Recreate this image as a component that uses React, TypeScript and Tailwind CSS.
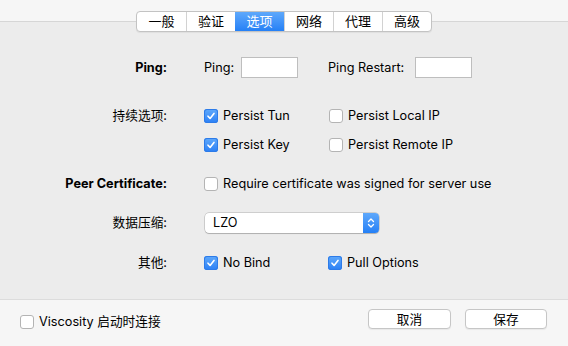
import React from 'react';

const font = { fontFamily: 'Inter, "Noto Sans CJK SC", sans-serif' };

const tabs = ['一般', '验证', '选项', '网络', '代理', '高级'];

function Checkbox({ checked, label }: { checked?: boolean; label: string }) {
    return (
        <div className="flex items-center gap-[5px]">
            {checked ? (
                <span className="flex h-[14px] w-[14px] items-center justify-center rounded-[3px] bg-gradient-to-b from-[#5fa9fb] to-[#2a7ff5] shadow-[inset_0_0_0_1px_#2d7be8]">
                    <svg width="10" height="10" viewBox="0 0 10 10" fill="none">
                        <path d="M2 5.2 L4.1 7.4 L8 2.4" stroke="white" strokeWidth="1.6" strokeLinecap="round" strokeLinejoin="round" />
                    </svg>
                </span>
            ) : (
                <span className="h-[14px] w-[14px] rounded-[3px] border border-[#b4b4b4] bg-white" />
            )}
            <span>{label}</span>
        </div>
    );
}

function Row({ label, bold, className, children }: { label: string; bold?: boolean; className?: string; children?: React.ReactNode }) {
    return (
        <div className={"flex items-center " + (className || '')}>
            <div className={"w-[167px] text-right " + (bold ? 'font-bold' : '')}>{label}</div>
            <div className="ml-[37px] flex items-center">{children}</div>
        </div>
    );
}

export default function App() {
    return (
        <div className="flex h-[346px] w-[568px] flex-col bg-[#ececec] text-[12.7px] text-black" style={font}>
            <div className="h-[22px] shrink-0 border-b border-[#d6d6d6] bg-[#f6f6f6]" />

            {/* tab switcher sits on the border line */}
            <div className="-mt-[11px] flex justify-center">
                <div className="flex h-[21px] overflow-hidden rounded-[4px] border border-[#c3c3c3] bg-white text-[13px] shadow-[0_1px_1px_rgba(0,0,0,0.06)]">
                    {tabs.map((t, i) => (
                        <div
                            key={t}
                            className={
                                "flex w-[49px] items-center justify-center " +
                                (i > 0 ? 'border-l border-[#d2d2d2] ' : '') +
                                (i === 2 ? 'border-l-0 bg-gradient-to-b from-[#5ea8fb] to-[#2480f6] text-white' : '')
                            }
                        >
                            {t}
                        </div>
                    ))}
                </div>
            </div>

            <div className="flex flex-1 flex-col">
                <Row label="Ping:" bold className="mt-[25px] h-[21px]">
                    <span className="w-[37px]">Ping:</span>
                    <span className="h-[21px] w-[57px] border border-[#bebebe] bg-white" />
                    <span className="ml-[30px] w-[87px]">Ping Restart:</span>
                    <span className="h-[21px] w-[57px] border border-[#bebebe] bg-white" />
                </Row>

                <Row label="持续选项:" className="mt-[27px] h-[22px]">
                    <div className="w-[125px]"><Checkbox checked label="Persist Tun" /></div>
                    <Checkbox label="Persist Local IP" />
                </Row>
                <Row label="" className="mt-[7px] h-[22px]">
                    <div className="w-[125px]"><Checkbox checked label="Persist Key" /></div>
                    <Checkbox label="Persist Remote IP" />
                </Row>

                <Row label="Peer Certificate:" bold className="mt-[17px] h-[22px]">
                    <Checkbox label="Require certificate was signed for server use" />
                </Row>

                <Row label="数据压缩:" className="mt-[18px] h-[20px]">
                    <div className="ml-px flex h-[20px] w-[174px] overflow-hidden rounded-[4px] bg-white shadow-[0_0_0_0.5px_rgba(0,0,0,0.25),0_1px_1px_rgba(0,0,0,0.15)]">
                        <span className="flex-1 pl-[8px] leading-[20px]">LZO</span>
                        <span className="flex w-[16px] items-center justify-center bg-gradient-to-b from-[#5ea8fb] to-[#2480f6]">
                            <svg width="8" height="12" viewBox="0 0 8 12" fill="none">
                                <path d="M1.5 4.5 L4 2 L6.5 4.5 M1.5 7.5 L4 10 L6.5 7.5" stroke="white" strokeWidth="1.3" strokeLinecap="round" strokeLinejoin="round" />
                            </svg>
                        </span>
                    </div>
                </Row>

                <Row label="其他:" className="mt-[19px] h-[22px]">
                    <div className="w-[124px]"><Checkbox checked label="No Bind" /></div>
                    <Checkbox checked label="Pull Options" />
                </Row>
            </div>

            <div className="flex h-[47px] shrink-0 items-start justify-between border-t border-[#dcdcdc] bg-[#f6f6f6] pl-[20px] pr-[21px] pt-[9px]">
                <div className="mt-[3px]"><Checkbox label="Viscosity 启动时连接" /></div>
                <div className="flex gap-[14px]">
                    <button className="h-[20px] w-[83px] rounded-[4px] border border-[#c6c6c6] bg-white shadow-[0_1px_1px_rgba(0,0,0,0.06)]">取消</button>
                    <button className="h-[20px] w-[82px] rounded-[4px] border border-[#c6c6c6] bg-white shadow-[0_1px_1px_rgba(0,0,0,0.06)]">保存</button>
                </div>
            </div>
        </div>
    );
}
